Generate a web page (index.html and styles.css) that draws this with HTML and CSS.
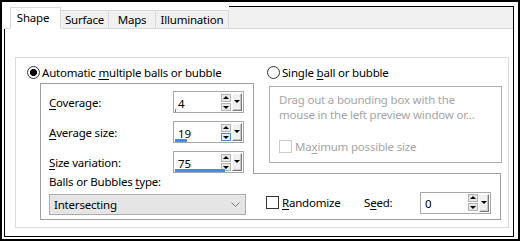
FILE: index.html
```html
<!DOCTYPE html>
<html lang="en">
<head>
    <meta charset="UTF-8">
    <title>Balls and Bubbles</title>
    <link rel="stylesheet" href="styles.css">
</head>
<body>
    <div class="frame">
        <div class="window">
            <div class="tab-strip">
                <div class="tab-lead"></div>
                <div class="tab active">Shape</div>
                <div class="tab surface">Surface</div>
                <div class="tab maps">Maps</div>
                <div class="tab illumination">Illumination</div>
                <div class="tab-fill"></div>
            </div>
            <div class="pane">
                <div class="group">
                    <div class="columns">
                        <div class="col-left">
                            <label class="radio-row"><span class="radio checked"></span><span>Automatic <u>m</u>ultiple balls or bubble</span></label>
                            <div class="params">
                                <div class="param-row">
                                    <span class="param-label"><u>C</u>overage:</span>
                                    <div class="spin">
                                        <span class="spin-value">4</span>
                                        <span class="spin-arrows"><span class="arrow up"></span><span class="arrow down"></span></span>
                                        <span class="spin-drop"></span>
                                        <span class="spin-bar" style="width: 1px"></span>
                                    </div>
                                </div>
                                <div class="param-row">
                                    <span class="param-label"><u>A</u>verage size:</span>
                                    <div class="spin">
                                        <span class="spin-value">19</span>
                                        <span class="spin-arrows"><span class="arrow up"></span><span class="arrow down hover"></span></span>
                                        <span class="spin-drop"></span>
                                        <span class="spin-bar" style="width: 12px"></span>
                                    </div>
                                </div>
                                <div class="param-row">
                                    <span class="param-label"><u>S</u>ize variation:</span>
                                    <div class="spin">
                                        <span class="spin-value">75</span>
                                        <span class="spin-arrows"><span class="arrow up"></span><span class="arrow down"></span></span>
                                        <span class="spin-drop"></span>
                                        <span class="spin-bar" style="width: 50px"></span>
                                    </div>
                                </div>
                            </div>
                        </div>
                        <div class="col-right">
                            <label class="radio-row"><span class="radio"></span><span>Single <u>b</u>all or bubble</span></label>
                            <div class="single-box">
                                <p class="hint">Drag out a bounding box with the<br>mouse in the left preview window or...</p>
                                <label class="check-row disabled"><span class="check"></span><span>Ma<u>x</u>imum possible size</span></label>
                            </div>
                        </div>
                    </div>
                    <div class="bottom">
                        <div class="type-part">
                            <div class="type-label">Balls or Bubbles <u>t</u>ype:</div>
                            <div class="select">
                                <span>Intersecting</span>
                                <svg width="9" height="5" viewBox="0 0 9 5"><path d="M0.5 0.5 L4.5 4.5 L8.5 0.5" fill="none" stroke="#7a7a7a"/></svg>
                            </div>
                        </div>
                        <div class="random-part">
                            <label class="check-row randomize"><span class="check"></span><span><u>R</u>andomize</span></label>
                            <span class="seed-label">S<u>e</u>ed:</span>
                            <div class="spin">
                                <span class="spin-value">0</span>
                                <span class="spin-arrows"><span class="arrow up"></span><span class="arrow down"></span></span>
                                <span class="spin-drop"></span>
                            </div>
                        </div>
                    </div>
                </div>
            </div>
        </div>
    </div>
</body>
</html>
```

FILE: styles.css
```css
body {
    margin: 0;
    font-family: "Noto Sans", sans-serif;
    font-size: 11.5px;
    letter-spacing: -0.2px;
    color: #000;
    background: #fff;
}
u {
    text-decoration-thickness: 1px;
    text-underline-offset: 2px;
}
.frame {
    width: 520px;
    height: 241px;
    box-sizing: border-box;
    border: 2px solid #000;
    padding: 4px 4px 2px 2px;
}
.window {
    height: 100%;
    box-sizing: border-box;
    border-right: 1px solid #000;
    border-bottom: 1px solid #000;
    display: flex;
    flex-direction: column;
}

/* tabs */
.tab-strip {
    display: flex;
    align-items: flex-end;
    height: 23px;
}
.tab-lead {
    width: 6px;
    height: 100%;
    box-sizing: border-box;
    border-bottom: 1px solid #d9d9d9;
}
.tab {
    height: 19px;
    box-sizing: border-box;
    line-height: 17px;
    text-align: center;
    background: #f0f0f0;
    border: 1px solid #d9d9d9;
    border-left: none;
}
.tab.active {
    width: 51px;
    height: 22px;
    padding-right: 5px;
    line-height: 20px;
    background: #fff;
    border-left: 1px solid #d9d9d9;
    border-bottom-color: #fff;
}
.tab.surface {
    width: 48px;
}
.tab.maps {
    width: 47px;
}
.tab.illumination {
    width: 73px;
}
.tab-fill {
    flex: 1;
    height: 100%;
    box-sizing: border-box;
    background: #f0f0f0;
    border-top: 1px solid #000;
    border-bottom: 1px solid #d9d9d9;
}

.pane {
    flex: 1;
    display: flex;
    border-left: 1px solid #000;
    padding: 28px 4px 8px 10px;
}
.group {
    flex: 1;
    border: 1px solid #dcdcdc;
    padding-left: 11px;
}
.columns {
    display: flex;
    gap: 13px;
}
.col-left {
    width: 227px;
}
.col-right {
    width: 235px;
}
.radio-row {
    display: flex;
    align-items: center;
    gap: 2px;
    height: 18px;
    margin-top: 5px;
}
.radio {
    width: 13px;
    height: 13px;
    box-sizing: border-box;
    border: 1px solid #333;
    border-radius: 50%;
    background: #fff;
}
.radio.checked {
    background: radial-gradient(circle, #000 0 3.3px, #fff 3.8px);
}

/* parameter box */
.params {
    margin: 2px 0 0 13px;
    width: 214px;
    box-sizing: border-box;
    border: 1px solid #a0a0a0;
    border-bottom: none;
    padding: 7px 9px 0 8px;
}
.param-row {
    display: flex;
    align-items: center;
    justify-content: space-between;
    height: 22px;
    margin-bottom: 8px;
}
.param-row:last-child {
    margin-bottom: 0;
}
.spin {
    position: relative;
    display: flex;
    align-items: center;
    width: 71px;
    height: 22px;
    box-sizing: border-box;
    border: 1px solid #a9a9a9;
    background: #fff;
}
.spin-value {
    flex: 1;
    padding: 2px 0 0 4px;
}
.spin-arrows {
    display: flex;
    flex-direction: column;
    gap: 1px;
    margin-right: 1px;
}
.arrow {
    position: relative;
    width: 10px;
    height: 8px;
    box-sizing: border-box;
    border: 1px solid #b4b4b4;
    background: #e8e8e8;
}
.arrow::after {
    content: "";
    position: absolute;
    left: 1px;
    border-left: 3px solid transparent;
    border-right: 3px solid transparent;
}
.arrow.up::after {
    top: 1px;
    border-bottom: 3px solid #000;
}
.arrow.down::after {
    top: 2px;
    border-top: 3px solid #000;
}
.arrow.hover {
    border-color: #3c8ce6;
    background: #e5f1fb;
}
.spin-drop {
    position: relative;
    width: 10px;
    height: 18px;
    box-sizing: border-box;
    margin-right: 1px;
    background: #f0f0f0;
    border-top: 1px solid #fff;
    border-left: 1px solid #fff;
    border-right: 1px solid #7a7a7a;
    border-bottom: 1px solid #7a7a7a;
    box-shadow: inset -1px -1px 0 #c8c8c8;
}
.spin-drop::after {
    content: "";
    position: absolute;
    left: 1px;
    top: 6px;
    border-left: 3px solid transparent;
    border-right: 3px solid transparent;
    border-top: 3px solid #000;
}
.spin-bar {
    position: absolute;
    left: 1px;
    bottom: 0;
    height: 3px;
    background: #3d8ee8;
}

/* single ball box */
.single-box {
    margin: 5px 0 0 2px;
    width: 233px;
    box-sizing: border-box;
    border: 1px solid #adadad;
    padding: 5px 8px 8px 9px;
    color: #a6a6a6;
}
.hint {
    margin: 0;
    line-height: 15px;
}
.check-row {
    display: flex;
    align-items: center;
    gap: 3px;
    height: 15px;
}
.single-box .check-row {
    margin-top: 17px;
}
.check {
    width: 13px;
    height: 13px;
    box-sizing: border-box;
    border: 1px solid #333;
    background: #fff;
}
.disabled .check {
    border-color: #cccccc;
}

/* bottom strip */
.bottom {
    display: flex;
    margin-left: 13px;
    width: 461px;
    height: 47px;
    box-sizing: border-box;
    border: 1px solid #a0a0a0;
    border-top: none;
}
.type-part {
    width: 212px;
    padding: 1px 7px 0 8px;
    box-sizing: border-box;
}
.type-label {
    line-height: 15px;
}
.select {
    display: flex;
    align-items: center;
    justify-content: space-between;
    margin-top: 5px;
    height: 21px;
    box-sizing: border-box;
    border: 1px solid #adadad;
    background: #e5e5e5;
    padding: 0 5px 0 4px;
}
.random-part {
    flex: 1;
    display: flex;
    align-items: center;
    border-top: 1px solid #a0a0a0;
    padding: 12px 0 0 13px;
}
.randomize {
    width: 98px;
}
.seed-label {
    width: 56px;
}
```
